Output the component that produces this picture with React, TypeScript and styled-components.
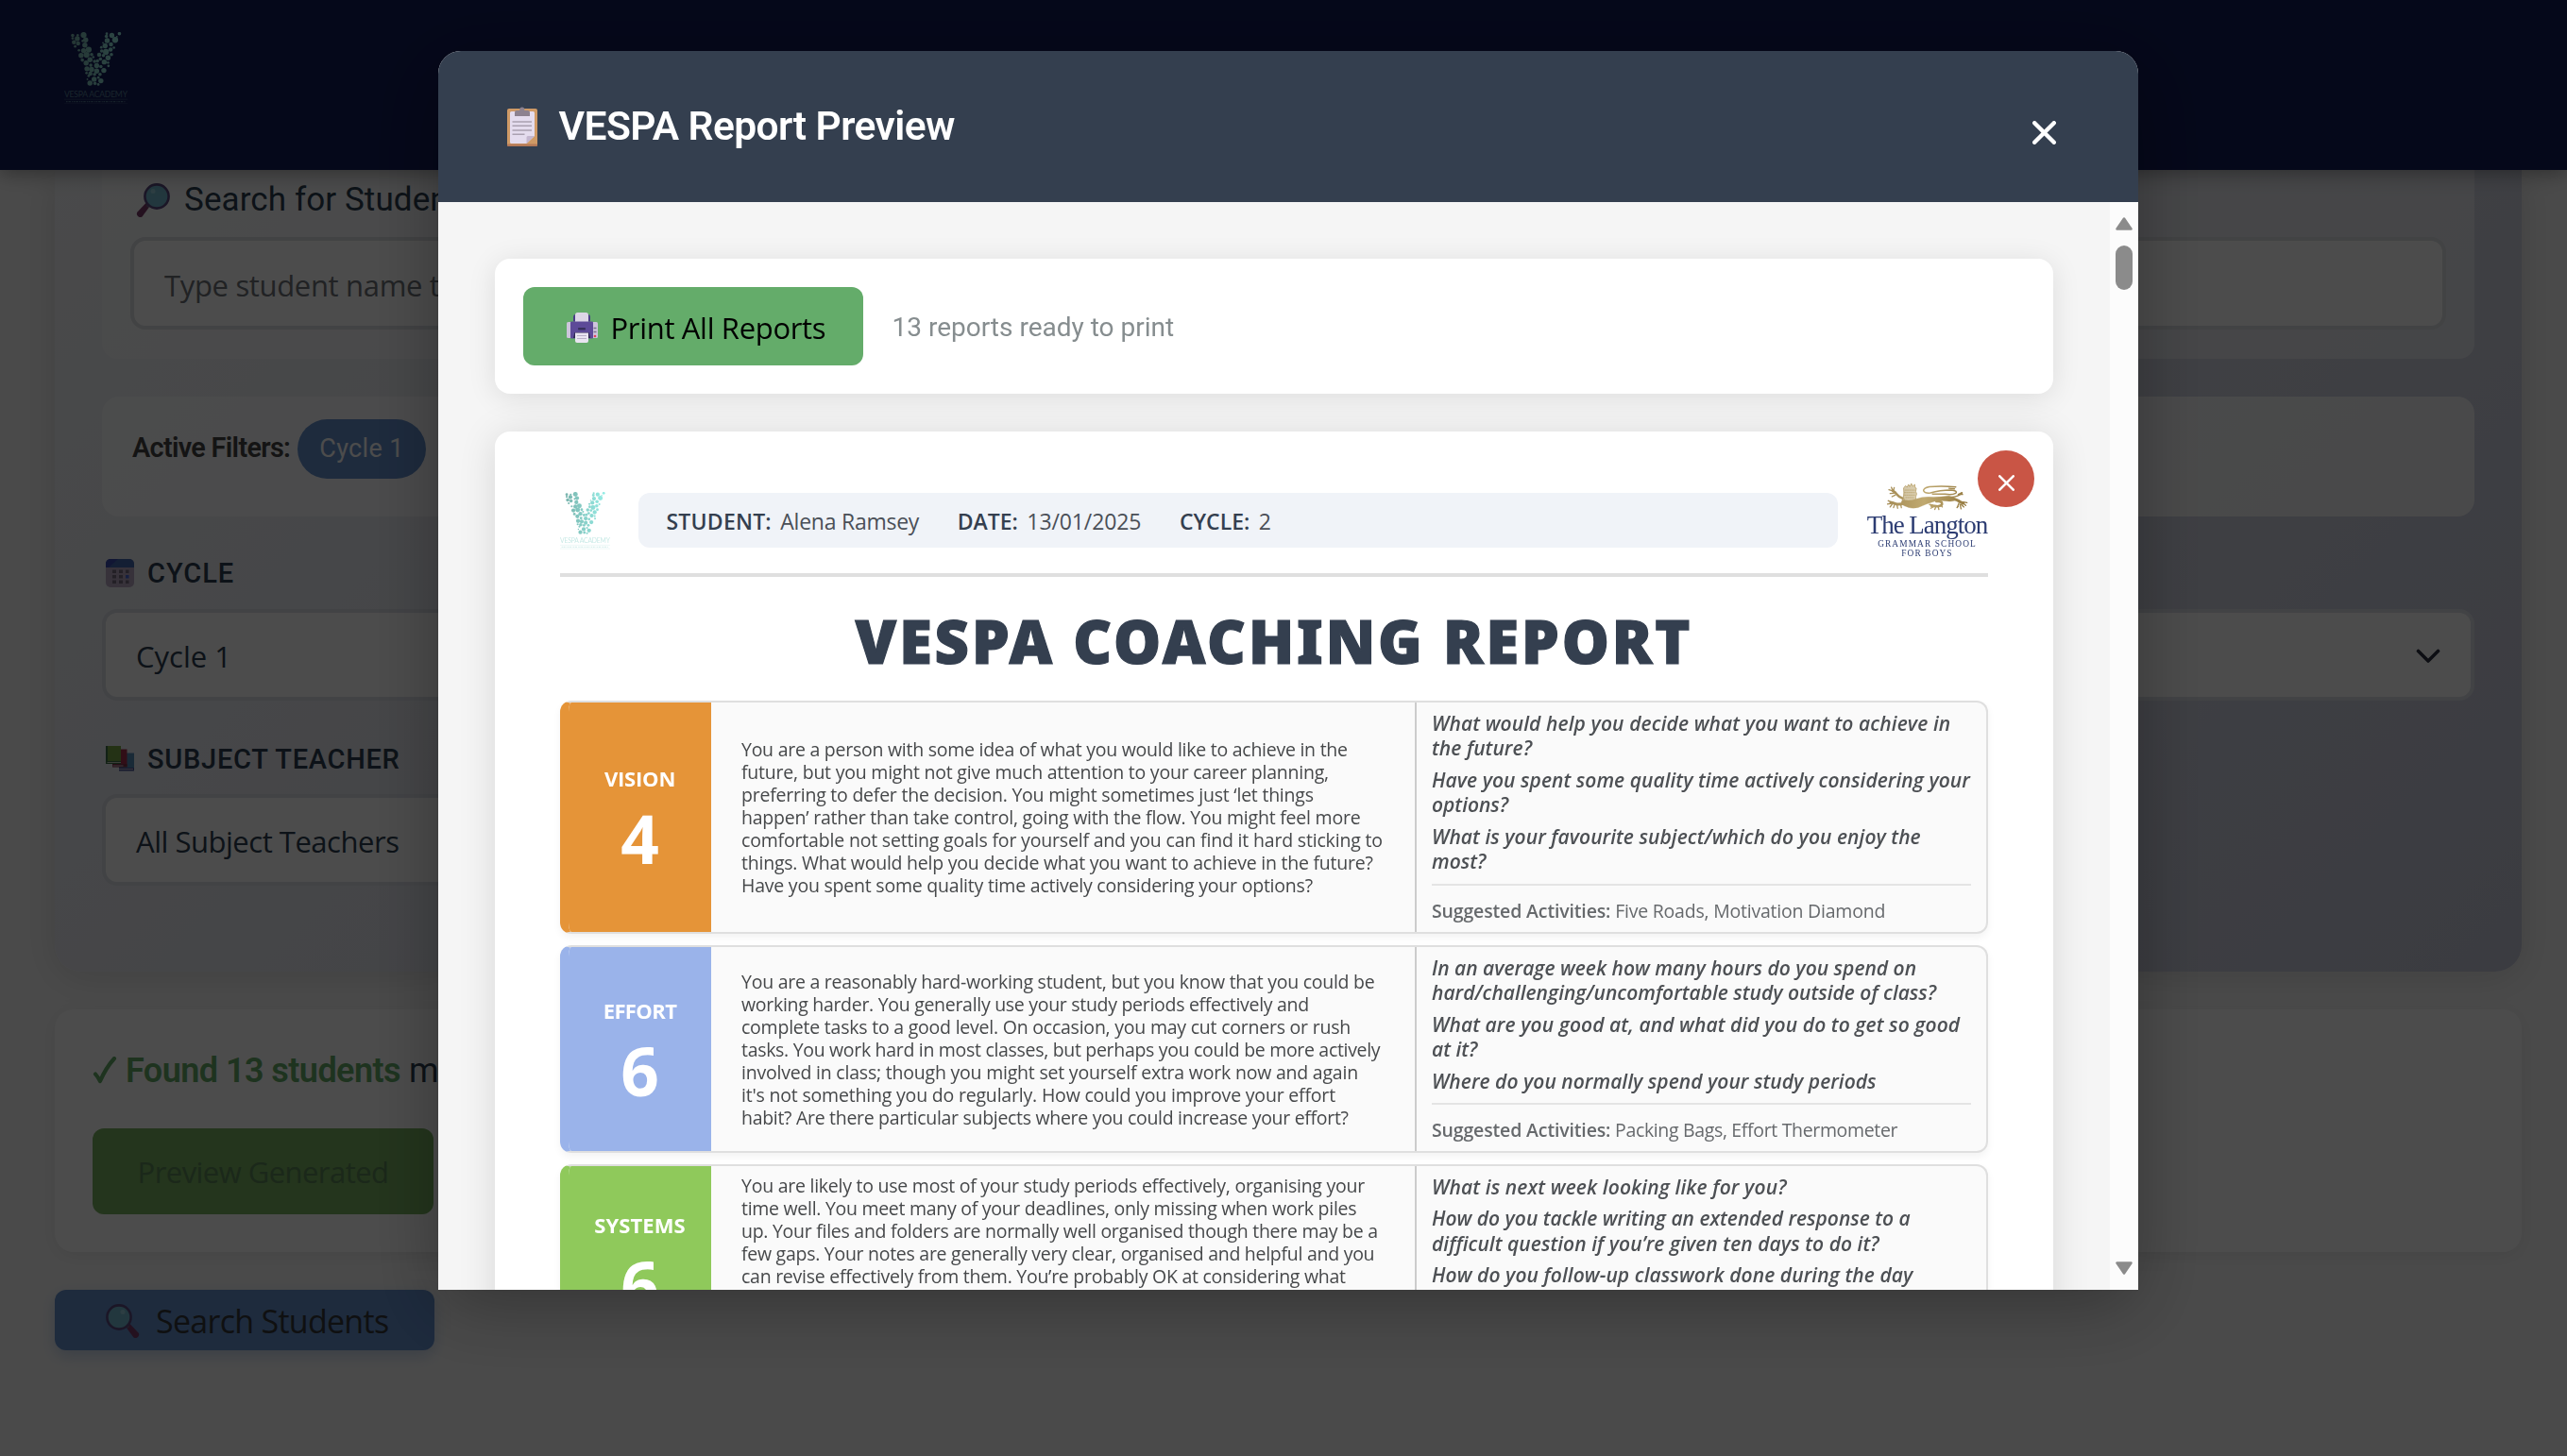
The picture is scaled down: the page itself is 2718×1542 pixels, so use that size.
import React from 'react';
import styled, { createGlobalStyle, css } from 'styled-components';

const ui = "'Open Sans', 'Noto Sans', sans-serif";
const roboto = "Roboto, 'Liberation Sans', sans-serif";

const GlobalStyle = createGlobalStyle`
  *, *::before, *::after { box-sizing: border-box; }
  html, body { margin: 0; padding: 0; }
  body { background: #f9f9f9; font-family: ${ui}; overflow: hidden; }
  button { font: inherit; border: 0; padding: 0; margin: 0; }
  svg { display: block; flex: none; }
`;

type Tracking = { $ls?: number };
const tracked = css<Tracking>`
  white-space: nowrap;
  letter-spacing: ${(p) => p.$ls ?? 0}px;
`;

/* ---------- page behind the dialog ---------- */

const Page = styled.div`
  height: 1542px;
  overflow: hidden;
  display: flex;
  flex-direction: column;
  align-items: stretch;
`;

const TopBar = styled.header`
  flex: none;
  height: 180px;
  padding: 34px 0 0 68px;
  background: #131b57;
  box-shadow: 0 4px 20px rgba(0, 0, 0, 0.35);
  z-index: 1;
`;

const FilterPanel = styled.section`
  flex: none;
  height: 849px;
  margin: 0 48px 0 58px;
  padding: 0 50px;
  border-radius: 0 0 28px 28px;
  background: linear-gradient(135deg, #f5f7fa 0%, #c6c9da 100%);
  box-shadow: 0 8px 40px rgba(0, 0, 0, 0.12);
`;

const SearchGroup = styled.div`
  height: 199.5px;
  padding: 7px 30px 0;
  border-radius: 0 0 16px 16px;
  background: rgba(255, 255, 255, 0.5);
`;

const GroupTitle = styled.div`
  display: flex;
  align-items: center;
  gap: 15px;
  height: 50px;
  padding-left: 6px;
  margin-bottom: 14px;
  color: #2c3e50;
  font: 400 35px/50px ${roboto};
  ${tracked}
`;

const SearchField = styled.div`
  display: flex;
  align-items: center;
  height: 98px;
  padding: 3px 32px 0;
  border: 4px solid #dcdfe3;
  border-radius: 16px;
  background: #fff;
  color: #6e7378;
  font-size: 31px;
  ${tracked}
`;

const ActiveFilters = styled.div`
  display: flex;
  align-items: flex-start;
  height: 127px;
  margin-top: 40.5px;
  padding: 24px 32px;
  border-radius: 18px;
  background: rgba(255, 255, 255, 0.8);
`;

const FilterLabel = styled.span`
  width: 175px;
  color: #444;
  font: 600 28.8px/61px ${roboto};
  ${tracked}
`;

const FilterPill = styled.span`
  width: 136px;
  border-radius: 32px;
  background: #648fcd;
  color: #fff;
  text-align: center;
  font: 400 27px/62.5px ${roboto};
  ${tracked}
`;

const FieldGrid = styled.div`
  display: grid;
  grid-template-columns: 1fr 1fr;
  gap: 37px 40px;
  margin-top: 35px;
`;

const FieldLabel = styled.div`
  display: flex;
  align-items: center;
  gap: 14px;
  height: 50px;
  padding-left: 4px;
  margin-bottom: 12.5px;
  color: #2c3e50;
  font: 500 29px/50px ${roboto};
  ${tracked}
`;

const SelectBox = styled.div`
  display: flex;
  align-items: center;
  justify-content: space-between;
  height: 97px;
  padding: 3px 32px 0;
  border: 4px solid #dde0e8;
  border-radius: 16px;
  background: #fff;
  color: #2c3e50;
  font-size: 31px;
  ${tracked}
`;

const Results = styled.section`
  flex: none;
  height: 257.5px;
  margin: 39.5px 48px 0 58px;
  padding: 35px 40px;
  border-radius: 20px;
  background: #fff;
  box-shadow: 0 4px 20px rgba(0, 0, 0, 0.08);
`;

const FoundLine = styled.p`
  display: flex;
  align-items: center;
  gap: 9px;
  margin: 0 0 31px;
  color: #2c3e50;
  font: 400 36px/60px ${roboto};
  white-space: nowrap;
`;

const FoundCount = styled.strong`
  color: #64ac6a;
  font-weight: 600;
  ${tracked}
`;

const PreviewButton = styled.button`
  width: 361px;
  height: 91px;
  padding-top: 2px;
  border-radius: 12px;
  background: #78b161;
  color: #5a8557;
  font-size: 31px;
  ${tracked}
`;

const SearchButton = styled.button`
  flex: none;
  display: flex;
  align-items: center;
  gap: 17px;
  width: 402px;
  height: 64px;
  margin: 40px 0 0 58px;
  padding: 2px 0 0 54px;
  border-radius: 12px;
  background: #648fcd;
  color: #35373a;
  font-size: 34px;
  box-shadow: 0 6px 16px rgba(100, 143, 205, 0.35);
  ${tracked}
`;

/* ---------- dialog ---------- */

const Overlay = styled.div`
  position: fixed;
  inset: 0;
  z-index: 10;
  display: flex;
  align-items: flex-start;
  justify-content: center;
  padding: 54px 0 0 10px;
  background: rgba(0, 0, 0, 0.7);
`;

const Dialog = styled.div`
  display: flex;
  flex-direction: column;
  width: 1800px;
  height: 1312px;
  border-radius: 24px 24px 0 0;
  overflow: hidden;
  background: #f5f5f5;
  box-shadow: 0 20px 80px rgba(0, 0, 0, 0.3);
`;

const DialogHeader = styled.div`
  flex: none;
  display: flex;
  align-items: center;
  justify-content: space-between;
  height: 160px;
  padding: 0 87px 0 73px;
  background: #343f4f;
`;

const DialogTitle = styled.h2`
  display: flex;
  align-items: center;
  gap: 22.5px;
  margin: 0;
  color: #fff;
  font: 600 42.5px/60px ${roboto};
  ${tracked}
`;

const CloseButton = styled.button`
  padding-top: 13px;
  background: none;
`;

const DialogBody = styled.div`
  flex: 1;
  min-height: 0;
  display: flex;
`;

const ScrollArea = styled.div`
  flex: 1;
  display: flex;
  flex-direction: column;
  gap: 40px;
  padding: 60px 60px 0;
  overflow: hidden;
`;

const Scrollbar = styled.div`
  flex: none;
  display: flex;
  flex-direction: column;
  align-items: center;
  width: 30px;
  padding: 16px 0;
  background: #fcfcfc;
`;

const Thumb = styled.div`
  width: 18px;
  height: 47px;
  margin: 16px 0 auto;
  border-radius: 9px;
  background: #8b8b8b;
`;

const PrintCard = styled.div`
  flex: none;
  display: flex;
  align-items: center;
  gap: 30.5px;
  height: 143px;
  padding: 0 30px;
  border-radius: 16px;
  background: #fff;
  box-shadow: 0 4px 30px rgba(0, 0, 0, 0.1);
`;

const PrintButton = styled.button`
  display: flex;
  align-items: center;
  gap: 13.5px;
  width: 360px;
  height: 83px;
  padding: 2px 0 0 46px;
  border-radius: 12px;
  background: #64ac6a;
  color: #000;
  font-size: 31px;
  ${tracked}
`;

const PrintNote = styled.span`
  padding-top: 2px;
  color: #868d8f;
  font: 400 28px/40px ${roboto};
  ${tracked}
`;

/* ---------- report ---------- */

const Report = styled.article`
  position: relative;
  flex: none;
  padding: 54px 69px 40px;
  border-radius: 16px;
  background: #fff;
  box-shadow: 0 4px 40px rgba(0, 0, 0, 0.12);
`;

const RemoveButton = styled.button`
  position: absolute;
  top: 20px;
  right: 20px;
  display: flex;
  justify-content: center;
  align-items: center;
  width: 60px;
  height: 60px;
  padding-top: 9px;
  border-radius: 50%;
  background: #c95545;
`;

const ReportHeader = styled.div`
  display: flex;
  align-items: center;
  height: 100px;
  padding-bottom: 15px;
  border-bottom: 4px solid #dfdfdf;
`;

const InfoBar = styled.div`
  display: flex;
  align-items: center;
  gap: 40.5px;
  width: 1270px;
  height: 58px;
  margin: 0 31px 1px 30px;
  padding: 1px 0 0 29.5px;
  border-radius: 12px;
  background: #f0f3f8;
  color: #4a4f57;
  font-size: 23px;
`;

const InfoItem = styled.span`
  display: flex;
  gap: 9.5px;
`;

const InfoLabel = styled.strong`
  color: #343f4f;
  font-weight: 600;
  ${tracked}
`;

const InfoValue = styled.span`
  ${tracked}
`;

const School = styled.div`
  display: flex;
  flex-direction: column;
  align-items: center;
  width: 127px;
  height: 81px;
  color: #2c3c72;
  font-family: 'Liberation Serif', 'Times New Roman', serif;
  white-space: nowrap;
`;

const SchoolName = styled.span`
  font-size: 27px;
  line-height: 30px;
  letter-spacing: -1px;
`;

const SchoolKind = styled.span`
  font-size: 9.4px;
  line-height: 10px;
  letter-spacing: 1.1px;
`;

const ReportTitle = styled.h1`
  margin: 24.6px 0 20.4px;
  color: #343f4f;
  text-align: center;
  white-space: nowrap;
  font: 900 63px/86px 'Noto Sans', 'Open Sans', sans-serif;
  letter-spacing: 2.9px;
  -webkit-text-stroke: 1.2px #343f4f;
`;

const Sections = styled.div`
  display: flex;
  flex-direction: column;
  gap: 12px;
`;

const SectionCard = styled.section<{ $color: string; $height: number }>`
  display: grid;
  grid-template-columns: 151px 745px 1fr;
  height: ${(p) => p.$height}px;
  border: 2px solid #dfdfdf;
  border-left: 9px solid ${(p) => p.$color};
  border-radius: 12px;
  overflow: hidden;
  background: #fafafa;
  box-shadow: 0 4px 8px rgba(0, 0, 0, 0.05);
`;

const ScoreCell = styled.div<{ $color: string }>`
  display: flex;
  flex-direction: column;
  align-items: center;
  justify-content: center;
  padding-top: 7px;
  background: ${(p) => p.$color};
  color: #fff;
  font-weight: 700;
`;

const ScoreLabel = styled.span`
  font-size: 22px;
  line-height: 30px;
  ${tracked}
`;

const ScoreValue = styled.span`
  margin-top: 9px;
  font-size: 71px;
  line-height: 80px;
`;

const Statement = styled.div<{ $fromTop?: boolean }>`
  display: flex;
  flex-direction: column;
  justify-content: ${(p) => (p.$fromTop ? 'flex-start' : 'center')};
  padding: ${(p) => (p.$fromTop ? '9px 0 0 32px' : '2px 0 0 32px')};
  color: #46484a;
`;

const StatementLine = styled.span`
  font-size: 19.5px;
  line-height: 24px;
  ${tracked}
`;

const Coaching = styled.div`
  padding: 9px 16px 0;
  border-left: 2px solid #cccccc;
`;

const Question = styled.p`
  display: flex;
  flex-direction: column;
  margin: 0 0 6.8px;
  color: #4d5054;
  font: italic 600 21px/26.5px ${ui};
`;

const QuestionLine = styled.span`
  ${tracked}
`;

const Activities = styled.div`
  margin-top: 10px;
  padding-top: 14px;
  border-top: 2px solid #e4e4e4;
  color: #66696c;
  font-size: 19.5px;
  line-height: 26px;
  ${tracked}
`;

const ActivitiesLabel = styled.strong`
  font-weight: 600;
  letter-spacing: -0.15px;
`;

/* ---------- drawings ---------- */

const DOTS: number[][] = [
  [20, 10, 4], [32, 10, 3], [46, 9, 7], [31, 20, 6], [20, 19, 3], [51, 24, 6], [23, 31, 5], [33, 35, 5], [44, 27, 3],
  [26, 44, 3], [49, 40, 6], [35, 56, 3], [46, 57, 6], [58, 54, 7], [40, 72, 6], [53, 70, 7], [65, 69, 4], [43, 86, 4],
  [61, 85, 6], [69, 77, 3], [52, 95, 6], [63, 102, 4], [72, 90, 4], [79, 89, 4], [83, 70, 5], [101, 5, 3], [113, 10, 6],
  [131, 5, 4], [121, 24, 7], [100, 13, 4], [125, 14, 2], [102, 26, 6], [92, 33, 2], [111, 38, 5], [97, 42, 6], [88, 47, 3],
  [118, 48, 3], [99, 61, 7], [110, 54, 5], [89, 58, 4], [112, 69, 4], [93, 72, 4], [104, 79, 6], [86, 83, 4], [95, 92, 6],
  [104, 94, 3], [77, 103, 6], [87, 106, 4], [54, 113, 6], [65, 115, 6], [77, 120, 6], [94, 118, 6], [105, 104, 3],
  [53, 126, 3], [62, 128, 5], [72, 130, 4], [85, 130, 4], [58, 135, 3], [71, 145, 6], [87, 150, 6], [81, 140, 3],
  [55, 145, 2], [61, 157, 6], [73, 158, 4], [81, 161, 3],
];

const Wordmark = styled.text`
  fill: #8fd3cc;
  font: 400 8.6px Lato, sans-serif;
`;

function VespaLogo({ width, id }: { width: number; id: string }) {
  return (
    <svg width={width} height={(width * 76) / 67} viewBox="0 0 67 76">
      <defs>
        <linearGradient id={id} gradientUnits="userSpaceOnUse" x1="8" y1="0" x2="60" y2="0">
          <stop offset="0" stopColor="#7ab5ae" />
          <stop offset="1" stopColor="#96ede6" />
        </linearGradient>
      </defs>
      {DOTS.map(([x, y, r], i) => (
        <circle key={i} cx={x * 0.446} cy={y * 0.344} r={r * 0.45} fill={`url(#${id})`} />
      ))}
      <Wordmark x="0" y="68.5" textLength="67" opacity="0.5">VESPA ACADEMY</Wordmark>
      <path d="M0 71.2H67M0 76H67" stroke="#8fd3cc" strokeWidth="0.6" opacity="0.35" />
      <path d="M2 73.6H65" stroke="#8fd3cc" strokeWidth="1.4" strokeDasharray="1.6 0.9 2.4 1.2 1 0.8" opacity="0.45" />
    </svg>
  );
}

const Lion = () => (
  <svg width="86" height="30" viewBox="142 152 260 90" fill="none" strokeLinecap="round" strokeLinejoin="round">
    <defs>
      <linearGradient id="gold" gradientUnits="userSpaceOnUse" x1="145" y1="0" x2="400" y2="0">
        <stop offset="0" stopColor="#a58c55" />
        <stop offset="0.45" stopColor="#c0a970" />
        <stop offset="1" stopColor="#94793f" />
      </linearGradient>
    </defs>
    <g stroke="url(#gold)">
      <path d="M196 168l6-6 4 5 5-9 4 7 5-10 4 9 7-6 1 10 4 2-2 10 3 8-3 10 1 9-8 6-10 4-12-1-8-6-2-12 1-12z" fill="url(#gold)" fillOpacity=".55" strokeWidth="2.5" />
      <path d="M200 176h30M198 184h34M198 192h34M202 200h26" strokeWidth="2" strokeDasharray="4 3" />
      <path d="M192 206q18 6 40-1q25-8 46-7q32 1 62-3q14 1 22 10q-8 10-28 6q-22-3-40 1q-30 9-52 20q-24 6-46-6q-14-8-4-20z" fill="url(#gold)" strokeWidth="1" />
      <path d="M192 202q-12-4-18-12t-14-12" strokeWidth="8" />
      <path d="M158 178l-10-3M160 176l-4-9M163 178l2-10M164 186l-12 1M168 192l-10 5" strokeWidth="4" />
      <path d="M200 216q-18 8-30 4t-16-4" strokeWidth="9" />
      <path d="M156 214l-10-4M154 219l-11 2M158 222l-6 8M166 223l-3 9M174 224l2 10M186 222l2 10" strokeWidth="4" />
      <path d="M300 212q16-2 18 6t-14 10q-10-2-20-2" strokeWidth="8" />
      <path d="M288 224l-10-2M290 230l-8 4M298 230l-3 8M306 230l2 8M314 224l5 6" strokeWidth="4" />
      <path d="M340 202q22 2 30 8t16 8" strokeWidth="9" />
      <path d="M386 214l12 2M388 220l6 5M380 222l8 8M376 222l3 14M372 218l-5 14M370 228l-4 4" strokeWidth="4" />
      <path d="M340 200q24-3 34-9t8-6M362 166q-40-4-84-1q-20 4-19 13q4 9 22 7q30-9 66-9q22 2 15 10q-10 6-34 3q-20-1-40 0" strokeWidth="4.5" />
      <path d="M340 170l18 2M370 190l12-6M376 190h8" strokeWidth="4" />
    </g>
  </svg>
);

const ClipboardIcon = () => (
  <svg width="32" height="42" viewBox="0 0 32 42">
    <rect y="2" width="32" height="40" rx="2" fill="#cf9a66" />
    <rect y="39.5" width="32" height="2.5" rx="1" fill="#b57a58" />
    <path d="M4.500 5h23a1.500 1.500 0 0 1 1.500 1.500V31l-8.500 8H4.500A1.500 1.500 0 0 1 3 37.500v-31A1.500 1.500 0 0 1 4.500 5z" fill="#e4dcee" />
    <path d="M29 31l-8.500 8v-6.500a1.500 1.500 0 0 1 1.500-1.500z" fill="#c3b6cf" />
    <path d="M8 10V6a2 2 0 0 1 2-2h3.500a2.600 2.600 0 0 1 4.600 0H22a2 2 0 0 1 2 2v4z" fill="#8d8290" />
    <circle cx="15.800" cy="3" r="2.600" fill="#8d8290" />
    <path d="M5.500 16h20.500M5.500 20.300h20.500M5.500 25h20.500M5.500 29.200H18.500" stroke="#a9a0b0" strokeWidth="1.600" />
  </svg>
);

const PrinterIcon = () => (
  <svg width="33" height="32" viewBox="0 0 33 32">
    <path d="M7 9.500V5q0-3 2.500-3h13Q25 2 25 5v4.500z" fill="#4a3f86" />
    <path d="M9 10V2.500Q9 0 11.500 0h9Q23 0 23 2.500V10z" fill="#dcd6e6" />
    <rect y="10" width="33" height="17" rx="1.500" fill="#cdc4dc" />
    <rect x="4" y="9.500" width="24" height="18" rx="1" fill="#5d4a98" />
    <rect x="12" y="16" width="8" height="2.600" rx="1" fill="#37305c" />
    <path d="M7 27l1.500-6h15l1.500 6z" fill="#2e2650" />
    <path d="M9 21.500h14V30q0 2-2 2H11q-2 0-2-2z" fill="#e9e4f1" />
    <path d="M11 24.500h10M11 27.500h10" stroke="#b9b0c8" strokeWidth="1.200" />
    <path d="M28.500 16.500h3M28.500 20.500h3" stroke="#7a7190" strokeWidth="1.500" />
    <circle cx="30" cy="25" r="1.300" fill="#e0405a" />
  </svg>
);

const MagnifierIcon = ({ flipped }: { flipped?: boolean }) => (
  <svg width="36" height="36" viewBox="0 0 36 36">
    <g transform={flipped ? 'translate(36 0) scale(-1 1)' : undefined}>
      <path d="M23 22.500l2.500-1.500 9 9.500q1.500 2.500-.5 4.500t-4.500.5L22.500 26z" fill="#7a3a68" />
      <path d="M20 21l4 4" stroke="#6f6682" strokeWidth="3" />
      <circle cx="14" cy="14" r="12.600" fill="#74b9cf" stroke="#5a4a80" strokeWidth="2.600" />
      <circle cx="18" cy="8.500" r="2.500" fill="#a8dbe6" opacity=".7" />
    </g>
  </svg>
);

const CalendarIcon = () => (
  <svg width="30" height="30" viewBox="0 0 30 30">
    <rect width="30" height="30" rx="5" fill="#b8a9c4" />
    <path d="M0 9V5a5 5 0 0 1 5-5h20a5 5 0 0 1 5 5v4z" fill="#4468ae" />
    <path d="M0 9V5a5 5 0 0 1 5-5h8L3 9z" fill="#3a4bb0" />
    <g fill="#766c80">
      <path d="M7 11.500h4v3.500H7zM14 11.500h4v3.500h-4zM21 11.500h3.500v3.500H21zM7 17h4v3.500H7zM14 17h4v3.500h-4zM7 22.500h4V26H7zM14 22.500h4V26h-4zM21 22.500h3.500V26H21z" />
    </g>
    <path d="M21 17h3.500v3.500H21z" fill="#4a68d8" />
  </svg>
);

const BooksIcon = () => (
  <svg width="30" height="27" viewBox="0 0 30 27">
    <path d="M14 7.500h16V26H14z" fill="#568cb8" />
    <path d="M14 23h16v3.500H14z" fill="#4c5698" />
    <path d="M7 3.500h15.500V22H7z" fill="#a3304f" />
    <path d="M7 19h15.500v3.500H7z" fill="#803048" />
    <path d="M14 24.500h15" stroke="#bcb4cc" strokeWidth="1" />
    <path d="M7.500 21h11" stroke="#cdbccc" strokeWidth="1" />
    <path d="M0 0h16v19H0z" fill="#78a848" />
    <path d="M0 0h2v19H0zM0 16h16v3H0z" fill="#3f7048" />
    <path d="M1.500 17.500H16" stroke="#c8d0c0" strokeWidth="1" />
  </svg>
);

const CrossIcon = ({ size, stroke }: { size: number; stroke: number }) => (
  <svg width={size} height={size} viewBox={`0 0 ${size} ${size}`}>
    <path
      d={`M${stroke / 2} ${stroke / 2}L${size - stroke / 2} ${size - stroke / 2}M${size - stroke / 2} ${stroke / 2}L${stroke / 2} ${size - stroke / 2}`}
      stroke="#fff"
      strokeWidth={stroke}
      strokeLinecap="round"
    />
  </svg>
);

const CheckIcon = () => (
  <svg width="26" height="30" viewBox="0 0 26 30" fill="none">
    <path d="M3 18.500Q6 22 8 26Q14 12 23 2" stroke="#64ac6a" strokeWidth="4.200" strokeLinecap="round" strokeLinejoin="round" />
  </svg>
);

const ChevronIcon = () => (
  <svg width="26" height="16" viewBox="0 0 26 16" fill="none">
    <path d="M2.500 2.500L13 13L23.500 2.500" stroke="#2c3040" strokeWidth="3.600" strokeLinecap="round" strokeLinejoin="round" />
  </svg>
);

const ScrollArrow = ({ down }: { down?: boolean }) => (
  <svg width="18" height="14" viewBox="0 0 18 14">
    <path
      d={down ? 'M1.500 1.500H16.500L9 12.500z' : 'M1.500 12.500H16.500L9 1.500z'}
      fill="#8b8b8b"
      stroke="#8b8b8b"
      strokeWidth="2.500"
      strokeLinejoin="round"
    />
  </svg>
);

/* ---------- content ---------- */

type Line = [string, number];

interface Section {
  name: string;
  nameSpacing: number;
  score: number;
  color: string;
  height: number;
  fromTop?: boolean;
  statement: Line[];
  questions: Line[][];
  activities?: Line;
}

const SECTIONS: Section[] = [
  {
    name: 'VISION',
    nameSpacing: -0.2,
    score: 4,
    color: '#e59438',
    height: 247,
    statement: [
      ['You are a person with some idea of what you would like to achieve in the', -0.254],
      ['future, but you might not give much attention to your career planning,', -0.223],
      ['preferring to defer the decision. You might sometimes just ‘let things', -0.228],
      ['happen’ rather than take control, going with the flow. You might feel more', -0.222],
      ['comfortable not setting goals for yourself and you can find it hard sticking to', -0.18],
      ['things. What would help you decide what you want to achieve in the future?', -0.225],
      ['Have you spent some quality time actively considering your options?', -0.22],
    ],
    questions: [
      [['What would help you decide what you want to achieve in', 0.1], ['the future?', 0.05]],
      [['Have you spent some quality time actively considering your', 0.04], ['options?', 0]],
      [['What is your favourite subject/which do you enjoy the', 0.05], ['most?', 0]],
    ],
    activities: ['Five Roads, Motivation Diamond', -0.22],
  },
  {
    name: 'EFFORT',
    nameSpacing: -0.6,
    score: 6,
    color: '#9ab3ea',
    height: 220,
    statement: [
      ['You are a reasonably hard-working student, but you know that you could be', -0.253],
      ['working harder. You generally use your study periods effectively and', -0.294],
      ['complete tasks to a good level. On occasion, you may cut corners or rush', -0.225],
      ['tasks. You work hard in most classes, but perhaps you could be more actively', -0.31],
      ['involved in class; though you might set yourself extra work now and again', -0.212],
      ["it's not something you do regularly. How could you improve your effort", -0.192],
      ['habit? Are there particular subjects where you could increase your effort?', -0.302],
    ],
    questions: [
      [['In an average week how many hours do you spend on', 0], ['hard/challenging/uncomfortable study outside of class?', 0]],
      [['What are you good at, and what did you do to get so good', 0.08], ['at it?', 0]],
      [['Where do you normally spend your study periods', 0.03]],
    ],
    activities: ['Packing Bags, Effort Thermometer', -0.34],
  },
  {
    name: 'SYSTEMS',
    nameSpacing: 0.1,
    score: 6,
    color: '#8fc95b',
    height: 210,
    fromTop: true,
    statement: [
      ['You are likely to use most of your study periods effectively, organising your', -0.247],
      ['time well. You meet many of your deadlines, only missing when work piles', -0.285],
      ['up. Your files and folders are normally well organised though there may be a', -0.272],
      ['few gaps. Your notes are generally very clear, organised and helpful and you', -0.273],
      ['can revise effectively from them. You’re probably OK at considering what', -0.263],
    ],
    questions: [
      [['What is next week looking like for you?', 0.12]],
      [['How do you tackle writing an extended response to a', -0.01], ['difficult question if you’re given ten days to do it?', 0.05]],
      [['How do you follow-up classwork done during the day', 0.07]],
    ],
  },
];

function ReportSection({ section: s }: { section: Section }) {
  return (
    <SectionCard $color={s.color} $height={s.height}>
      <ScoreCell $color={s.color}>
        <ScoreLabel $ls={s.nameSpacing}>{s.name}</ScoreLabel>
        <ScoreValue>{s.score}</ScoreValue>
      </ScoreCell>
      <Statement $fromTop={s.fromTop}>
        {s.statement.map(([text, ls]) => (
          <StatementLine key={text} $ls={ls}>{text}</StatementLine>
        ))}
      </Statement>
      <Coaching>
        {s.questions.map((lines) => (
          <Question key={lines[0][0]}>
            {lines.map(([text, ls]) => (
              <QuestionLine key={text} $ls={ls}>{text}</QuestionLine>
            ))}
          </Question>
        ))}
        {s.activities && (
          <Activities $ls={s.activities[1]}>
            <ActivitiesLabel>Suggested Activities:</ActivitiesLabel> {s.activities[0]}
          </Activities>
        )}
      </Coaching>
    </SectionCard>
  );
}

export default function App() {
  return (
    <>
      <GlobalStyle />
      <Page>
        <TopBar>
          <VespaLogo width={67} id="vespa-bar" />
        </TopBar>
        <FilterPanel>
          <SearchGroup>
            <GroupTitle $ls={0.1}><MagnifierIcon flipped />Search for Student</GroupTitle>
            <SearchField $ls={-0.33}>Type student name to search</SearchField>
          </SearchGroup>
          <ActiveFilters>
            <FilterLabel $ls={-0.67}>Active Filters:</FilterLabel>
            <FilterPill $ls={0.35}>Cycle 1</FilterPill>
          </ActiveFilters>
          <FieldGrid>
            <div>
              <FieldLabel $ls={1}><CalendarIcon />CYCLE</FieldLabel>
              <SelectBox>Cycle 1</SelectBox>
            </div>
            <div>
              <FieldLabel />
              <SelectBox><span /><ChevronIcon /></SelectBox>
            </div>
            <div>
              <FieldLabel $ls={0.73}><BooksIcon />SUBJECT TEACHER</FieldLabel>
              <SelectBox $ls={-0.47}>All Subject Teachers</SelectBox>
            </div>
          </FieldGrid>
        </FilterPanel>
        <Results>
          <FoundLine>
            <CheckIcon />
            <FoundCount $ls={-0.55}>Found 13 students</FoundCount>
            matching
          </FoundLine>
          <PreviewButton $ls={-0.55}>Preview Generated</PreviewButton>
        </Results>
        <SearchButton $ls={-0.72}><MagnifierIcon />Search Students</SearchButton>
      </Page>

      <Overlay>
        <Dialog>
          <DialogHeader>
            <DialogTitle $ls={-0.57}><ClipboardIcon />VESPA Report Preview</DialogTitle>
            <CloseButton><CrossIcon size={25} stroke={4.4} /></CloseButton>
          </DialogHeader>
          <DialogBody>
            <ScrollArea>
              <PrintCard>
                <PrintButton $ls={-0.32}><PrinterIcon />Print All Reports</PrintButton>
                <PrintNote>13 reports ready to print</PrintNote>
              </PrintCard>
              <Report>
                <RemoveButton><CrossIcon size={17} stroke={2.6} /></RemoveButton>
                <ReportHeader>
                  <VespaLogo width={53} id="vespa-report" />
                  <InfoBar>
                    <InfoItem>
                      <InfoLabel $ls={0.2}>STUDENT:</InfoLabel>
                      <InfoValue $ls={-0.25}>Alena Ramsey</InfoValue>
                    </InfoItem>
                    <InfoItem>
                      <InfoLabel>DATE:</InfoLabel>
                      <InfoValue $ls={-0.1}>13/01/2025</InfoValue>
                    </InfoItem>
                    <InfoItem>
                      <InfoLabel>CYCLE:</InfoLabel>
                      <InfoValue>2</InfoValue>
                    </InfoItem>
                  </InfoBar>
                  <School>
                    <Lion />
                    <SchoolName>The Langton</SchoolName>
                    <SchoolKind>GRAMMAR SCHOOL</SchoolKind>
                    <SchoolKind>FOR BOYS</SchoolKind>
                  </School>
                </ReportHeader>
                <ReportTitle>VESPA COACHING REPORT</ReportTitle>
                <Sections>
                  {SECTIONS.map((s) => <ReportSection key={s.name} section={s} />)}
                </Sections>
              </Report>
            </ScrollArea>
            <Scrollbar>
              <ScrollArrow />
              <Thumb />
              <ScrollArrow down />
            </Scrollbar>
          </DialogBody>
        </Dialog>
      </Overlay>
    </>
  );
}
